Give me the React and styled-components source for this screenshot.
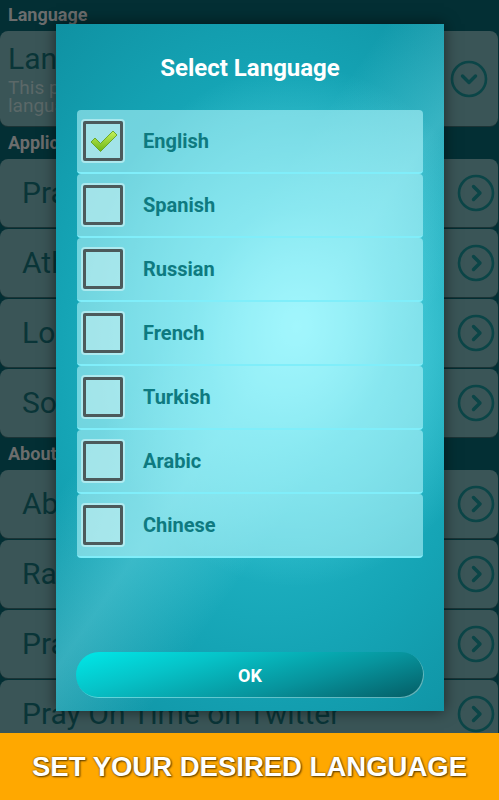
import { useState } from "react"
import styled, { createGlobalStyle } from "styled-components"

const GlobalStyle = createGlobalStyle`
    html, body {
        margin: 0;
        padding: 0;
        background: #032f34;
    }
    * {
        box-sizing: border-box;
    }
`

const languages = ["English", "Spanish", "Russian", "French", "Turkish", "Arabic", "Chinese"]

const appRows = ["Prayer Times", "Athan Settings", "Location", "Sound"]
const aboutRows = ["About", "Rate Us", "Pray On Time on Facebook", "Pray On Time on Twitter"]

const ChevronCircle = ({ down }) => (
    <svg width="38" height="38" viewBox="0 0 38 38">
        <circle cx="19" cy="19" r="17" fill="none" stroke="#0b4547" strokeWidth="2.6" />
        {down ? (
            <path d="M12.5 16 L19 22.5 L25.5 16" fill="none" stroke="#0b4547" strokeWidth="3.4" strokeLinecap="round" strokeLinejoin="round" />
        ) : (
            <path d="M16.5 12.5 L23 19 L16.5 25.5" fill="none" stroke="#0b4547" strokeWidth="3.4" strokeLinecap="round" strokeLinejoin="round" />
        )}
    </svg>
)

const CheckMark = () => (
    <svg width="30" height="26" viewBox="0 0 30 26">
        <defs>
            <linearGradient id="chk" x1="0" y1="0" x2="0" y2="1">
                <stop offset="0" stopColor="#c6f25a" />
                <stop offset="1" stopColor="#6cb516" />
            </linearGradient>
        </defs>
        <path d="M2 14 L6 10 L11.5 15.5 L24 3 L28 7 L11.5 23.5 Z" fill="url(#chk)" stroke="#5a9a12" strokeWidth="0.8" strokeLinejoin="round" />
    </svg>
)

export default function App() {
    const [selected, setSelected] = useState("English")

    return (
        <>
            <GlobalStyle />
            <Screen>
                <Content>
                    <SectionLabel>Language</SectionLabel>
                    <LanguageCard>
                        <CardText>
                            <BigTitle>Language</BigTitle>
                            <Subtitle>This preference sets the application<br />language</Subtitle>
                        </CardText>
                        <IconSlot $right={10}><ChevronCircle down /></IconSlot>
                    </LanguageCard>
                    <SectionLabel>Application Settings</SectionLabel>
                    {appRows.map((r) => (
                        <SettingRow key={r}>
                            <BigTitle>{r}</BigTitle>
                            <IconSlot $right={3}><ChevronCircle /></IconSlot>
                        </SettingRow>
                    ))}
                    <SectionLabel>About</SectionLabel>
                    {aboutRows.map((r) => (
                        <SettingRow key={r}>
                            <BigTitle>{r}</BigTitle>
                            <IconSlot $right={3}><ChevronCircle /></IconSlot>
                        </SettingRow>
                    ))}

                    <Dialog>
                        <DialogTitle>Select Language</DialogTitle>
                        <LanguageList>
                            {languages.map((lang) => (
                                <LanguageRow key={lang} onClick={() => setSelected(lang)}>
                                    <CheckBox>{selected === lang && <CheckMark />}</CheckBox>
                                    <LanguageName>{lang}</LanguageName>
                                </LanguageRow>
                            ))}
                        </LanguageList>
                        <OkButton>OK</OkButton>
                    </Dialog>
                </Content>
                <Banner>SET YOUR DESIRED LANGUAGE</Banner>
            </Screen>
        </>
    )
}

const Screen = styled.div`
    width: 499px;
    height: 800px;
    display: flex;
    flex-direction: column;
    overflow: hidden;
    font-family: Roboto, "Noto Sans", sans-serif;
`

const Content = styled.div`
    position: relative;
    flex: 1;
    display: flex;
    flex-direction: column;
    gap: 2px;
    overflow: hidden;
    background: #032f34;
`

const SectionLabel = styled.div`
    height: 29px;
    padding-left: 8px;
    display: flex;
    align-items: center;
    font-size: 18px;
    font-weight: 700;
    color: #6b6d6d;
    flex-shrink: 0;
    white-space: nowrap;
`

const CardBase = styled.div`
    position: relative;
    margin: 0 1px 0 0;
    background: #3a5557;
    border-radius: 8px;
    box-shadow: 0 1px 0 #1c3436;
    flex-shrink: 0;
    display: flex;
    align-items: center;
    overflow: hidden;
    white-space: nowrap;
`

const LanguageCard = styled(CardBase)`
    height: 95px;
    padding-left: 8px;
`

const SettingRow = styled(CardBase)`
    height: 68px;
    padding-left: 22px;
`

const CardText = styled.div`
    display: flex;
    flex-direction: column;
`

const BigTitle = styled.div`
    font-size: 30px;
    color: #0a3538;
    line-height: 34px;
`

const Subtitle = styled.div`
    font-size: 19px;
    line-height: 18px;
    color: #5b6868;
    margin-top: 3px;
`

const IconSlot = styled.div`
    position: absolute;
    right: ${(p) => p.$right}px;
    top: 50%;
    transform: translateY(-50%);
    display: flex;
`

const Dialog = styled.div`
    position: absolute;
    left: 56px;
    top: 24px;
    width: 388px;
    height: 687px;
    display: flex;
    flex-direction: column;
    padding: 29px 21px 13px;
    background:
        radial-gradient(ellipse 55% 38% at 62% 44%, rgba(135, 244, 252, 0.95) 0%, rgba(120, 240, 250, 0.45) 45%, rgba(120, 240, 250, 0) 100%),
        linear-gradient(125deg, rgba(255, 255, 255, 0) 38%, rgba(140, 230, 240, 0.3) 52%, rgba(255, 255, 255, 0) 66%),
        radial-gradient(ellipse 90% 70% at 55% 50%, #2cc3d3 0%, #15a4b5 60%, #0e8e9f 100%);
    box-shadow: 0 0 14px rgba(0, 0, 0, 0.55);
`

const DialogTitle = styled.h2`
    margin: 0;
    height: 30px;
    text-align: center;
    font-size: 24px;
    font-weight: 700;
    color: #ffffff;
    line-height: 30px;
`

const LanguageList = styled.div`
    margin-top: 27px;
    display: flex;
    flex-direction: column;
`

const LanguageRow = styled.div`
    height: 64px;
    display: flex;
    align-items: center;
    padding-left: 6px;
    border-radius: 4px;
    background: rgba(185, 250, 255, 0.56);
    border-bottom: 2px solid #80eefa;
    cursor: pointer;
`

const CheckBox = styled.div`
    width: 40px;
    height: 40px;
    border: 3px solid #4c5a5b;
    border-radius: 2px;
    background: rgba(195, 238, 240, 0.6);
    box-shadow: 0 0 0 2px rgba(220, 250, 252, 0.55);
    display: flex;
    align-items: center;
    justify-content: center;
    padding-left: 2px;
`

const LanguageName = styled.span`
    margin-left: 20px;
    font-size: 20px;
    font-weight: 700;
    color: #0e7a80;
`

const OkButton = styled.button`
    margin-top: auto;
    height: 46px;
    width: 348px;
    margin-left: -1px;
    border: none;
    border-radius: 23px;
    background: linear-gradient(165deg, #00e8e8 0%, #06c3c8 30%, #07939c 65%, #045c64 100%);
    box-shadow: inset -1px -1px 0 rgba(160, 230, 235, 0.6);
    color: #ffffff;
    font-family: Roboto, "Noto Sans", sans-serif;
    font-size: 18px;
    font-weight: 700;
    cursor: pointer;
`

const Banner = styled.div`
    height: 67px;
    flex-shrink: 0;
    background: #ffa800;
    display: flex;
    align-items: center;
    justify-content: center;
    font-family: "Liberation Sans", Arial, sans-serif;
    font-weight: 700;
    font-size: 27.5px;
    color: #ffffff;
    text-shadow: 0 0 2px #6b4a00, 1px 1px 2px #5a3c00;
`
